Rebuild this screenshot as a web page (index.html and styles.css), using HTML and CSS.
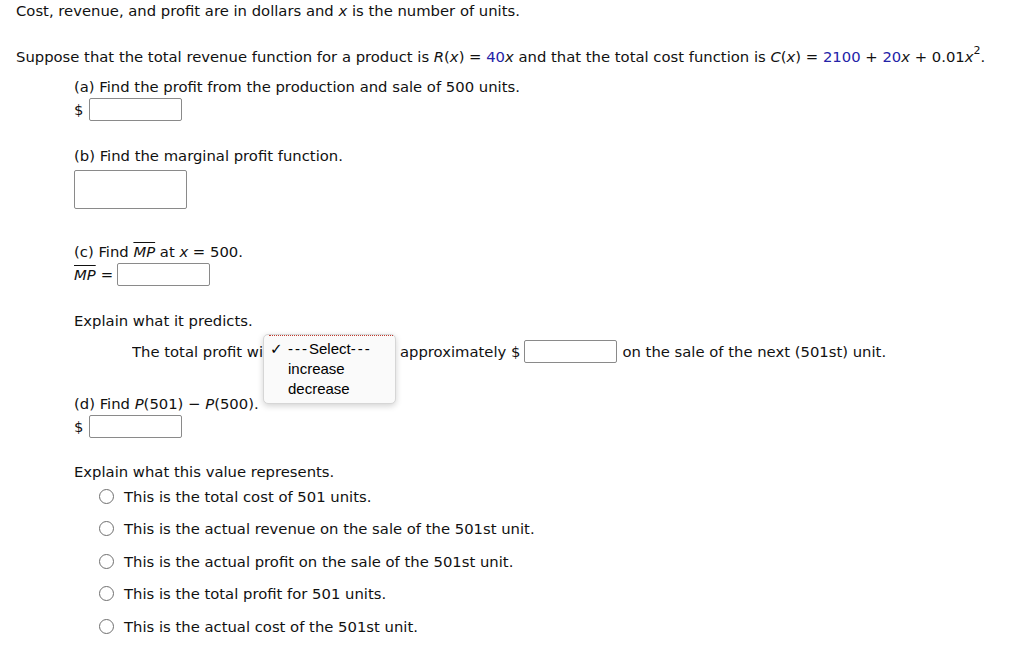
FILE: index.html
```html
<!DOCTYPE html>
<html>
<head>
<meta charset="utf-8">
<link rel="stylesheet" href="styles.css">
</head>
<body>
<div class="page">
  <div class="line l1">Cost, revenue, and profit are in dollars and <i>x</i> is the number of units.</div>
  <div class="line l2">Suppose that the total revenue function for a product is <i>R</i>(<i>x</i>) = <span class="num">40</span><i>x</i> and that the total cost function is <i>C</i>(<i>x</i>) = <span class="num">2100</span> + <span class="num">20</span><i>x</i> + 0.01<i>x</i><sup>2</sup>.</div>

  <div class="part">
    <div class="line pa">(a) Find the profit from the production and sale of 500 units.</div>
    <div class="row ra"><span>$</span><span class="box small"></span></div>

    <div class="line pb">(b) Find the marginal profit function.</div>
    <div class="box big"></div>

    <div class="line pc">(c) Find <span class="ol"><i>MP</i></span> at <i>x</i> = 500.</div>
    <div class="row rc"><span class="ol"><i>MP</i></span><span class="eq">=</span><span class="box small"></span></div>

    <div class="line pe">Explain what it predicts.</div>
    <div class="row rp">
      <span class="lead">The total profit wi<span class="under">ll <span class="sel">---Select---</span></span></span>
      <span>approximately $</span><span class="box small"></span><span>on the sale of the next (501st) unit.</span>
      <div class="menu">
        <div class="menu-item"><span class="check">✓</span><span class="hy">---</span>Select<span class="hy">---</span></div>
        <div class="menu-item">increase</div>
        <div class="menu-item">decrease</div>
      </div>
    </div>

    <div class="line pd">(d) Find <i>P</i>(501) − <i>P</i>(500).</div>
    <div class="row ra"><span>$</span><span class="box small"></span></div>

    <div class="line px">Explain what this value represents.</div>
    <div class="radios">
      <div class="radio"><span class="dot"></span>This is the total cost of 501 units.</div>
      <div class="radio"><span class="dot"></span>This is the actual revenue on the sale of the 501st unit.</div>
      <div class="radio"><span class="dot"></span>This is the actual profit on the sale of the 501st unit.</div>
      <div class="radio"><span class="dot"></span>This is the total profit for 501 units.</div>
      <div class="radio"><span class="dot"></span>This is the actual cost of the 501st unit.</div>
    </div>
  </div>
</div>
</body>
</html>
```
FILE: styles.css
```css
html, body { margin: 0; padding: 0; background: #fff; }
body {
  font-family: "DejaVu Sans", Verdana, sans-serif;
  font-size: 14.8px;
  color: #111;
}
.page { padding: 1px 0 0 16px; }
.line { line-height: 20px; height: 20px; white-space: nowrap; }
.l2 { margin-top: 26px; }
.num { color: #2323a8; }
sup { font-size: 11px; line-height: 0; vertical-align: 8px; }
.part { margin-left: 58px; }
.pa { margin-top: 10px; }
.row { display: flex; align-items: center; height: 23px; white-space: nowrap; }
.ra { margin-top: 1px; }
.ra .box { margin-left: 6px; }
.box {
  box-sizing: border-box;
  border: 1px solid #8a8a8a;
  border-radius: 2px;
  background: #fff;
  display: inline-block;
}
.box.small { width: 93px; height: 23px; }
.box.big { display: block; width: 113px; height: 39px; margin-top: 4px; }
.pb { margin-top: 25px; }
.pc { margin-top: 33px; }
.ol { text-decoration: overline; }
.rc { margin-top: 1px; }
.eq { margin-left: 5px; margin-right: 4px; }
.pe { margin-top: 25px; }
.rp { margin-top: 9px; margin-left: 58px; position: relative; }
.lead { width: 268px; overflow: hidden; display: inline-block; }
.under { visibility: hidden; }
.sel { display: inline-block; border: 1px solid #aaa; border-radius: 3px; padding: 0 4px; font-family: "Liberation Sans", Arial, sans-serif; }
.rp .box { margin: 0 5px 0 4px; }
.menu {
  position: absolute;
  left: 131px;
  top: -6px;
  width: 133px;
  height: 70px;
  box-sizing: border-box;
  background: #fafafa;
  border: 1px solid #d6d6d6;
  border-radius: 5px;
  box-shadow: 0 2px 6px rgba(0,0,0,0.18);
  padding-top: 4px;
  font-family: "Liberation Sans", Arial, sans-serif;
  font-size: 15px;
  color: #000;
}
.menu::before {
  content: "";
  position: absolute;
  left: 5px; right: 2px; top: 0;
  border-top: 1px dotted #c0392b;
}
.menu-item { height: 20px; line-height: 20px; padding-left: 24px; position: relative; }
.hy { letter-spacing: 2px; }
.check { position: absolute; left: 6px; font-size: 15px; font-weight: bold; font-family: "DejaVu Sans", sans-serif; }
.pd { margin-top: 31px; }
.px { margin-top: 24px; }
.radios { display: flex; flex-direction: column; gap: 12.5px; margin-top: 4px; margin-left: 25px; }
.radio { display: flex; align-items: center; height: 20px; white-space: nowrap; }
.dot {
  width: 15px; height: 15px; box-sizing: border-box;
  border: 1px solid #6f6f6f; border-radius: 50%;
  margin-right: 10px; background: #fff;
}
```
